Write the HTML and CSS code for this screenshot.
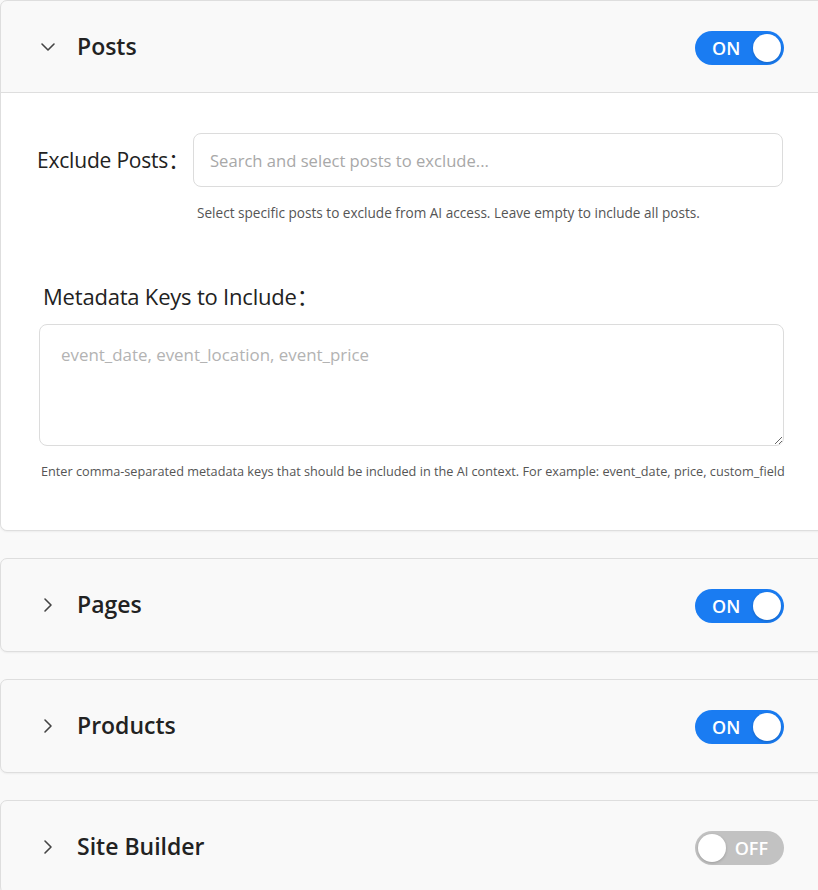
FILE: index.html
```html
<!DOCTYPE html>
<html lang="en">
<head>
<meta charset="utf-8">
<title>Content Settings</title>
<link rel="stylesheet" href="styles.css">
</head>
<body>
<div class="wrap">
  <section class="card">
    <div class="card-head first">
      <svg class="chev" width="16" height="16" viewBox="0 0 16 16"><path d="M2 5 L8 11 L14 5" fill="none" stroke="#444" stroke-width="1.6" stroke-linecap="round" stroke-linejoin="round"/></svg>
      <h2 class="title">Posts</h2>
      <span class="toggle on"><span class="t-label">ON</span><span class="knob"></span></span>
    </div>
    <div class="card-body">
      <div class="field-row">
        <label class="field-label">Exclude Posts：</label>
        <div class="select-box">Search and select posts to exclude...</div>
      </div>
      <p class="help help-indent">Select specific posts to exclude from AI access. Leave empty to include all posts.</p>
      <label class="block-label">Metadata Keys to Include：</label>
      <textarea class="meta" placeholder="event_date, event_location, event_price"></textarea>
      <p class="help help-wide">Enter comma-separated metadata keys that should be included in the AI context. For example: event_date, price, custom_field</p>
    </div>
  </section>

  <section class="card">
    <div class="card-head">
      <svg class="chev" width="16" height="16" viewBox="0 0 16 16"><path d="M5 2 L11 8 L5 14" fill="none" stroke="#444" stroke-width="1.6" stroke-linecap="round" stroke-linejoin="round"/></svg>
      <h2 class="title">Pages</h2>
      <span class="toggle on"><span class="t-label">ON</span><span class="knob"></span></span>
    </div>
  </section>

  <section class="card">
    <div class="card-head">
      <svg class="chev" width="16" height="16" viewBox="0 0 16 16"><path d="M5 2 L11 8 L5 14" fill="none" stroke="#444" stroke-width="1.6" stroke-linecap="round" stroke-linejoin="round"/></svg>
      <h2 class="title">Products</h2>
      <span class="toggle on"><span class="t-label">ON</span><span class="knob"></span></span>
    </div>
  </section>

  <section class="card">
    <div class="card-head">
      <svg class="chev" width="16" height="16" viewBox="0 0 16 16"><path d="M5 2 L11 8 L5 14" fill="none" stroke="#444" stroke-width="1.6" stroke-linecap="round" stroke-linejoin="round"/></svg>
      <h2 class="title">Site Builder</h2>
      <span class="toggle off"><span class="knob"></span><span class="t-label">OFF</span></span>
    </div>
  </section>
</div>
</body>
</html>
```

FILE: styles.css
```css
html, body {
  margin: 0;
  padding: 0;
  background: #f9f9f9;
  font-family: "Open Sans", "Noto Sans CJK SC", sans-serif;
  color: #222;
  overflow: hidden;
}

.wrap {
  width: 818px;
  display: flex;
  flex-direction: column;
  gap: 27px;
}

.card {
  margin-right: -12px;
  border: 1px solid #dedede;
  border-radius: 7px;
  background: #f9f9f9;
  box-shadow: 0 1px 2px rgba(0, 0, 0, 0.05);
}

.card-head {
  height: 92px;
  display: flex;
  align-items: center;
  padding: 0 45px 0 39px;
}

.card-head.first {
  height: 91px;
}

.chev {
  flex: none;
}

.title {
  margin: -2px 0 0 21px;
  flex: 1;
  font-size: 23px;
  font-weight: 600;
  color: #222;
  letter-spacing: 0;
}

.toggle {
  width: 89px;
  height: 34px;
  border-radius: 17px;
  display: flex;
  align-items: center;
  box-sizing: border-box;
  padding: 0 3px;
  margin-top: 2px;
}

.toggle.on {
  background: #1a7cf2;
  justify-content: space-between;
}

.toggle.off {
  background: #c2c2c2;
  justify-content: space-between;
}

.t-label {
  color: #fff;
  font-size: 18px;
  font-weight: 600;
}

.toggle.on .t-label {
  margin-left: 14px;
}

.toggle.off .t-label {
  margin-right: 13px;
}

.knob {
  width: 28px;
  height: 28px;
  border-radius: 50%;
  background: #fff;
  box-shadow: 0 1px 3px rgba(0, 0, 0, 0.2);
}

.card-body {
  background: #fff;
  border-top: 1px solid #dedede;
  border-radius: 0 0 7px 7px;
  padding: 40px 46px 50px 36px;
}

.field-row {
  display: flex;
  align-items: center;
}

.field-label {
  width: 156px;
  flex: none;
  margin-top: -2px;
  font-size: 21px;
  color: #222;
  letter-spacing: -0.2px;
}

.select-box {
  flex: 1;
  height: 54px;
  box-sizing: border-box;
  border: 1px solid #dcdcdc;
  border-radius: 8px;
  padding: 0 16px;
  display: flex;
  align-items: center;
  font-size: 16.6px;
  color: #a8a8a8;
}

.help {
  margin: 0;
  font-size: 13.6px;
  color: #555;
  line-height: 18px;
}

.help-indent {
  margin: 17px 0 0 160px;
}

.block-label {
  display: block;
  margin: 59px 0 0 6px;
  font-size: 22px;
  color: #222;
  line-height: 30px;
  letter-spacing: -0.2px;
}

.meta {
  display: block;
  width: calc(100% - 1px);
  height: 122px;
  box-sizing: border-box;
  margin: 13px 0 0 2px;
  border: 1px solid #dcdcdc;
  border-radius: 8px;
  padding: 18px 21px;
  font-family: "Open Sans", sans-serif;
  font-size: 16.9px;
  resize: vertical;
  outline: none;
}

.meta::placeholder {
  color: #b3b3b3;
}

.help-wide {
  margin: 16px 0 0 4px;
  font-size: 12.7px;
  white-space: nowrap;
}
```
